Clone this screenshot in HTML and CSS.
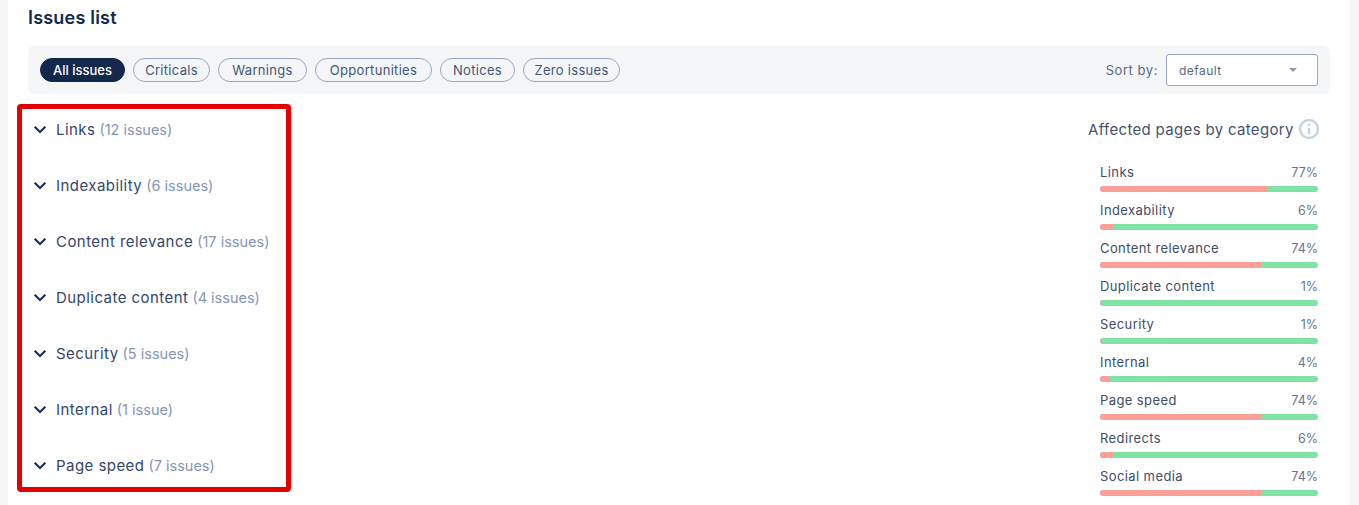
FILE: index.html
```html
<!DOCTYPE html>
<html lang="en">
<head>
<meta charset="utf-8">
<title>Issues list</title>
<link rel="stylesheet" href="styles.css">
</head>
<body>
<main class="panel">
  <h2 class="title">Issues list</h2>
  <div class="filters">
    <div class="pills">
      <span class="pill active">All issues</span>
      <span class="pill">Criticals</span>
      <span class="pill">Warnings</span>
      <span class="pill">Opportunities</span>
      <span class="pill">Notices</span>
      <span class="pill">Zero issues</span>
    </div>
    <div class="sort">
      <span class="sort-label">Sort by:</span>
      <div class="select"><span>default</span><i class="caret"></i></div>
    </div>
  </div>
  <div class="content">
    <ul class="issues">
      <li class="issue"><svg class="chev" viewBox="0 0 12 8"><path d="M1.2 1.5 6 6.2l4.8-4.7"/></svg><span class="name">Links</span> <span class="count">(12 issues)</span></li>
      <li class="issue"><svg class="chev" viewBox="0 0 12 8"><path d="M1.2 1.5 6 6.2l4.8-4.7"/></svg><span class="name">Indexability</span> <span class="count">(6 issues)</span></li>
      <li class="issue"><svg class="chev" viewBox="0 0 12 8"><path d="M1.2 1.5 6 6.2l4.8-4.7"/></svg><span class="name">Content relevance</span> <span class="count">(17 issues)</span></li>
      <li class="issue"><svg class="chev" viewBox="0 0 12 8"><path d="M1.2 1.5 6 6.2l4.8-4.7"/></svg><span class="name">Duplicate content</span> <span class="count">(4 issues)</span></li>
      <li class="issue"><svg class="chev" viewBox="0 0 12 8"><path d="M1.2 1.5 6 6.2l4.8-4.7"/></svg><span class="name">Security</span> <span class="count">(5 issues)</span></li>
      <li class="issue"><svg class="chev" viewBox="0 0 12 8"><path d="M1.2 1.5 6 6.2l4.8-4.7"/></svg><span class="name">Internal</span> <span class="count">(1 issue)</span></li>
      <li class="issue"><svg class="chev" viewBox="0 0 12 8"><path d="M1.2 1.5 6 6.2l4.8-4.7"/></svg><span class="name">Page speed</span> <span class="count">(7 issues)</span></li>
    </ul>
    <aside class="affected">
      <div class="affected-head">
        <span>Affected pages by category</span>
        <svg class="info" viewBox="0 0 22 22"><circle cx="11" cy="11" r="9"/><path d="M11 10v6"/><circle class="dot" cx="11" cy="6.8" r="1.4"/></svg>
      </div>
      <div class="stat"><div class="stat-row"><span>Links</span><span class="pct">77%</span></div><div class="bar"><div class="bad" style="width:77%"></div></div></div>
      <div class="stat"><div class="stat-row"><span>Indexability</span><span class="pct">6%</span></div><div class="bar"><div class="bad" style="width:6%"></div></div></div>
      <div class="stat"><div class="stat-row"><span>Content relevance</span><span class="pct">74%</span></div><div class="bar"><div class="bad" style="width:74%"></div></div></div>
      <div class="stat"><div class="stat-row"><span>Duplicate content</span><span class="pct">1%</span></div><div class="bar"><div class="bad" style="width:1%"></div></div></div>
      <div class="stat"><div class="stat-row"><span>Security</span><span class="pct">1%</span></div><div class="bar"><div class="bad" style="width:1%"></div></div></div>
      <div class="stat"><div class="stat-row"><span>Internal</span><span class="pct">4%</span></div><div class="bar"><div class="bad" style="width:4%"></div></div></div>
      <div class="stat"><div class="stat-row"><span>Page speed</span><span class="pct">74%</span></div><div class="bar"><div class="bad" style="width:74%"></div></div></div>
      <div class="stat"><div class="stat-row"><span>Redirects</span><span class="pct">6%</span></div><div class="bar"><div class="bad" style="width:6%"></div></div></div>
      <div class="stat"><div class="stat-row"><span>Social media</span><span class="pct">74%</span></div><div class="bar"><div class="bad" style="width:74%"></div></div></div>
    </aside>
  </div>
  <div class="highlight"></div>
</main>
</body>
</html>
```
FILE: styles.css
```css
* { box-sizing: border-box; }
html, body { margin: 0; height: 505px; overflow: hidden; }
body {
  background: #f3f5f7;
  font-family: Inter, "Liberation Sans", sans-serif;
  color: #34466b;
}
.panel {
  position: relative;
  margin: 0 9px 0 8px;
  height: 505px;
  padding: 0 20px;
  background: #fff;
}
.title {
  margin: 0;
  height: 46px;
  padding-top: 6px;
  font-size: 18px;
  line-height: 24px;
  font-weight: 600;
  letter-spacing: 0.2px;
  color: #14284b;
}
.filters {
  height: 48px;
  padding: 0 12px;
  display: flex;
  align-items: center;
  justify-content: space-between;
  background: #f3f5f7;
  border-radius: 6px;
}
.pills { display: flex; gap: 8px; }
.pill {
  height: 24px;
  border: 1px solid #98a6bd;
  border-radius: 12px;
  font-size: 13px;
  line-height: 23px;
  letter-spacing: 0.3px;
  text-align: center;
  color: #43567a;
}
.pill:nth-child(1) { width: 85px; }
.pill:nth-child(2) { width: 77px; }
.pill:nth-child(3) { width: 89px; }
.pill:nth-child(4) { width: 117px; }
.pill:nth-child(5) { width: 75px; }
.pill:nth-child(6) { width: 97px; }
.pill.active {
  background: #14284b;
  border-color: #14284b;
  color: #fff;
  font-weight: 500;
  letter-spacing: 0;
}
.sort { display: flex; align-items: center; gap: 8px; }
.sort-label { font-size: 13px; letter-spacing: 0.55px; color: #5a6884; }
.select {
  width: 152px;
  height: 32px;
  padding: 0 20px 0 12px;
  display: flex;
  align-items: center;
  justify-content: space-between;
  background: #fff;
  border: 1px solid #98a6bd;
  border-radius: 3px;
  font-size: 12px;
  letter-spacing: 0.45px;
  color: #5a6784;
}
.caret {
  width: 0;
  height: 0;
  border-left: 4px solid transparent;
  border-right: 4px solid transparent;
  border-top: 4.5px solid #8e9ab0;
}
.content {
  display: flex;
  justify-content: space-between;
  padding-top: 8px;
}
.issues { list-style: none; margin: -1px 0 0; padding: 0; }
.issue {
  height: 56px;
  display: flex;
  align-items: center;
  gap: 4px;
  white-space: pre;
}
.chev {
  width: 14px;
  height: 9px;
  margin: 0 5px 0 5px;
  fill: none;
  stroke: #1b3157;
  stroke-width: 1.9;
}
.name { color: #34466b; font-size: 15px; letter-spacing: 0.45px; }
.count { color: #8595b4; font-size: 14.5px; }
.affected { width: 242px; padding-top: 17px; }
.affected-head {
  height: 20px;
  display: flex;
  align-items: center;
  gap: 4px;
  font-size: 15px;
  letter-spacing: 0.33px;
  color: #45536f;
  white-space: nowrap;
}
.info {
  width: 22px;
  height: 22px;
  flex: none;
  fill: none;
  stroke: #c5d3e0;
  stroke-width: 2.4;
}
.info .dot { fill: #c5d3e0; stroke: none; }
.stat { width: 218px; margin-left: 12px; height: 38px; }
.affected-head + .stat { margin-top: 23px; }
.stat-row {
  height: 20px;
  display: flex;
  justify-content: space-between;
  align-items: center;
  font-size: 13px;
  letter-spacing: 0.4px;
  color: #3f4d66;
}
.pct { color: #68748a; font-size: 12.5px; letter-spacing: 0; }
.bar {
  height: 6px;
  margin-top: 4px;
  border-radius: 3px;
  overflow: hidden;
  background: #7fe3a5;
}
.bad { height: 100%; background: #fc9f96; }
.highlight {
  position: absolute;
  left: 9px;
  top: 104px;
  width: 274px;
  height: 388px;
  border: 5px solid #e30000;
  border-radius: 4px;
  pointer-events: none;
}
```
